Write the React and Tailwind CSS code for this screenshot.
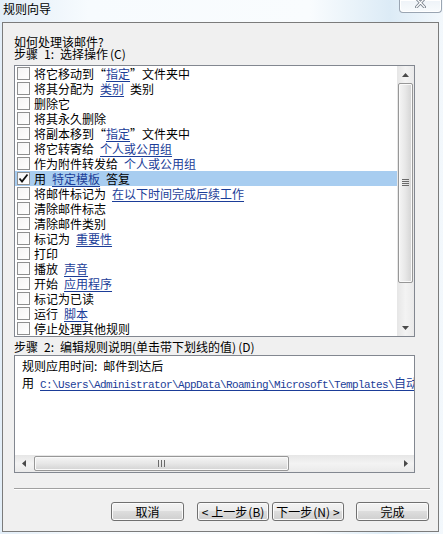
import React from "react";

const Gap = ({ w = "w-[6px]" }) => <span className={`inline-block shrink-0 ${w}`} />;
const L = ({ children }) => (
  <span className="text-[#1b3d98] underline underline-offset-[2px] decoration-[1px]">{children}</span>
);

const rows = [
  <>将它移动到“<L>指定</L>”文件夹中</>,
  <>将其分配为<Gap /><L>类别</L><Gap />类别</>,
  <>删除它</>,
  <>将其永久删除</>,
  <>将副本移到“<L>指定</L>”文件夹中</>,
  <>将它转寄给<Gap /><L>个人或公用组</L></>,
  <>作为附件转发给<Gap /><L>个人或公用组</L></>,
  <>用<Gap /><L>特定模板</L><Gap />答复</>,
  <>将邮件标记为<Gap /><L>在以下时间完成后续工作</L></>,
  <>清除邮件标志</>,
  <>清除邮件类别</>,
  <>标记为<Gap /><L>重要性</L></>,
  <>打印</>,
  <>播放<Gap /><L>声音</L></>,
  <>开始<Gap /><L>应用程序</L></>,
  <>标记为已读</>,
  <>运行<Gap /><L>脚本</L></>,
  <>停止处理其他规则</>,
];

function CheckBox({ checked }) {
  return (
    <span className="w-[13px] h-[13px] border border-[#8e8f8f] bg-gradient-to-br from-[#f4f4f4] to-white flex items-center justify-center shrink-0">
      {checked && (
        <svg width="11" height="11" viewBox="0 0 11 11">
          <path d="M1.5 5.5 L4 8.5 L9.5 1.5" fill="none" stroke="#111" strokeWidth="1.8" />
        </svg>
      )}
    </span>
  );
}

function Arrow({ dir }) {
  const pts = {
    up: "0,4 3.5,0 7,4",
    down: "0,0 3.5,4 7,0",
    left: "4,0 0,3.5 4,7",
    right: "0,0 4,3.5 0,7",
  }[dir];
  const vert = dir === "up" || dir === "down";
  return (
    <svg width={vert ? 7 : 4} height={vert ? 4 : 7} viewBox={vert ? "0 0 7 4" : "0 0 4 7"}>
      <polygon points={pts} fill="#4a4a4a" />
    </svg>
  );
}

function VScroll() {
  return (
    <div className="w-[17px] h-full flex flex-col bg-gradient-to-r from-[#e6e6e6] via-[#f3f3f3] to-[#eaeaea]">
      <div className="h-[17px] flex items-center justify-center">
        <Arrow dir="up" />
      </div>
      <div className="h-[200px] mx-[1px] rounded-[2px] border border-[#979797] bg-gradient-to-r from-[#f5f5f5] via-[#e7e7e7] to-[#d3d3d3] shadow-[inset_0_0_0_1px_#fafafa] flex items-center justify-center">
        <svg width="7" height="8" viewBox="0 0 7 8">
          {[0, 2, 4, 6].map((y) => (
            <rect key={y} x="0" y={y} width="7" height="1" fill="#6a6a6a" />
          ))}
        </svg>
      </div>
      <div className="flex-1" />
      <div className="h-[17px] flex items-center justify-center">
        <Arrow dir="down" />
      </div>
    </div>
  );
}

function HScroll() {
  return (
    <div className="h-[17px] flex bg-gradient-to-b from-[#e6e6e6] via-[#f3f3f3] to-[#eaeaea]">
      <div className="w-[17px] flex items-center justify-center">
        <Arrow dir="left" />
      </div>
      <div className="w-[255px] ml-[2px] my-[1px] rounded-[2px] border border-[#979797] bg-gradient-to-b from-[#f5f5f5] via-[#e7e7e7] to-[#d3d3d3] shadow-[inset_0_0_0_1px_#fafafa] flex items-center justify-center">
        <svg width="7" height="7" viewBox="0 0 7 7">
          {[0, 3, 6].map((x) => (
            <rect key={x} x={x} y="0" width="1" height="7" fill="#6a6a6a" />
          ))}
        </svg>
      </div>
      <div className="flex-1" />
      <div className="w-[17px] flex items-center justify-center">
        <Arrow dir="right" />
      </div>
    </div>
  );
}

function Btn({ children, w, className = "" }) {
  return (
    <div
      className={`h-[19px] ${w} ${className} rounded-[3px] border border-[#707070] bg-[linear-gradient(#f3f3f3,#ebebeb_50%,#dddddd_50%,#cfcfcf)] shadow-[inset_0_0_0_1px_#fbfbfb] flex items-center justify-center text-[12px] leading-none text-black whitespace-nowrap`}
    >
      {children}
    </div>
  );
}

export default function App() {
  return (
    <div
      lang="zh-CN"
      className="w-[443px] h-[534px] overflow-hidden bg-[linear-gradient(90deg,#e3eef8,#f7fbfe_20%,#f9fcfe_70%,#dcebf6_88%,#f3f8fc)] font-['Noto_Sans_CJK_SC','Noto_Sans',sans-serif] text-black text-[12px]"
    >
      {/* title bar */}
      <div className="h-[22px] flex items-start">
        <div className="ml-[3px] mt-[2px] text-[12px] leading-[14px] text-black">规则向导</div>
        <div className="ml-auto mr-[1px] w-[43px] h-[13px] rounded-b-[4px] border border-t-0 border-[#9aa5b2] bg-gradient-to-b from-[#eef3f8] to-[#f8fbfd] shadow-[inset_0_0_0_1px_#ffffff] flex justify-center overflow-hidden">
          <svg width="11" height="10" viewBox="0 0 11 10" className="-mt-[2px]">
            <path d="M1.5 0.5 L9.5 9 M9.5 0.5 L1.5 9" stroke="#7c8590" strokeWidth="3" strokeLinecap="round" />
            <path d="M1.5 0.5 L9.5 9 M9.5 0.5 L1.5 9" stroke="#ffffff" strokeWidth="1.2" strokeLinecap="round" />
          </svg>
        </div>
      </div>

      {/* client area */}
      <div className="ml-[2px] w-[437px] border border-[#7b7b7b] bg-[#f0f0f0] pl-[11px] pt-[13px] pb-[10px]">
        <div className="leading-[12px]">如何处理该邮件?</div>
        <div className="leading-[12px] whitespace-nowrap">
          步骤<Gap />1:<Gap />选择操作<Gap w="w-[2px]" />(C)
        </div>

        {/* action list */}
        <div className="mt-[5px] w-[401px] h-[272px] border border-[#828790] bg-white flex">
          <div className="flex-1 flex flex-col">
            {rows.map((r, i) => (
              <div
                key={i}
                className={`h-[15px] flex items-center whitespace-nowrap ${i === 7 ? "bg-[#a8cdf0]" : ""}`}
              >
                <span className="ml-[2px] mr-[4px]">
                  <CheckBox checked={i === 7} />
                </span>
                <span className="leading-[15px]">{r}</span>
              </div>
            ))}
          </div>
          <VScroll />
        </div>

        <div className="mt-[4px] leading-[12px] whitespace-nowrap">
          步骤<Gap />2:<Gap />编辑规则说明(单击带下划线的值)<Gap w="w-[2px]" />(D)
        </div>

        {/* rule description */}
        <div className="mt-[2px] w-[401px] h-[118px] border border-[#828790] bg-white flex flex-col">
          <div className="flex-1 overflow-hidden pl-[7px] pt-[4px] whitespace-nowrap">
            <div className="leading-[12px]">
              规则应用时间:<Gap />邮件到达后
            </div>
            <div className="mt-[5px] leading-[12px]">
              <span>用</span>
              <Gap />
              <span className="text-[#1b3d98] underline underline-offset-[2px] decoration-[1px]">
                <span className="font-['Liberation_Mono',monospace] text-[11px] tracking-[-0.6px]">
                  C:\Users\Administrator\AppData\Roaming\Microsoft\Templates\
                </span>
                自动回复.oft
              </span>
            </div>
          </div>
          <HScroll />
        </div>

        {/* separator */}
        <div className="mt-[15px] w-[416px] border-t border-t-[#a0a0a0] border-b border-b-white" />

        {/* buttons */}
        <div className="mt-[12px] flex">
          <Btn w="w-[73px]" className="ml-[97px]">取消</Btn>
          <Btn w="w-[72px]" className="ml-[13px]">&lt;<Gap w="w-[3px]" />上一步<Gap w="w-[1px]" />(B)</Btn>
          <Btn w="w-[72px]" className="ml-[3px]">下一步<Gap w="w-[1px]" />(N)<Gap w="w-[3px]" />&gt;</Btn>
          <Btn w="w-[73px]" className="ml-[12px]">完成</Btn>
        </div>
      </div>
    </div>
  );
}
